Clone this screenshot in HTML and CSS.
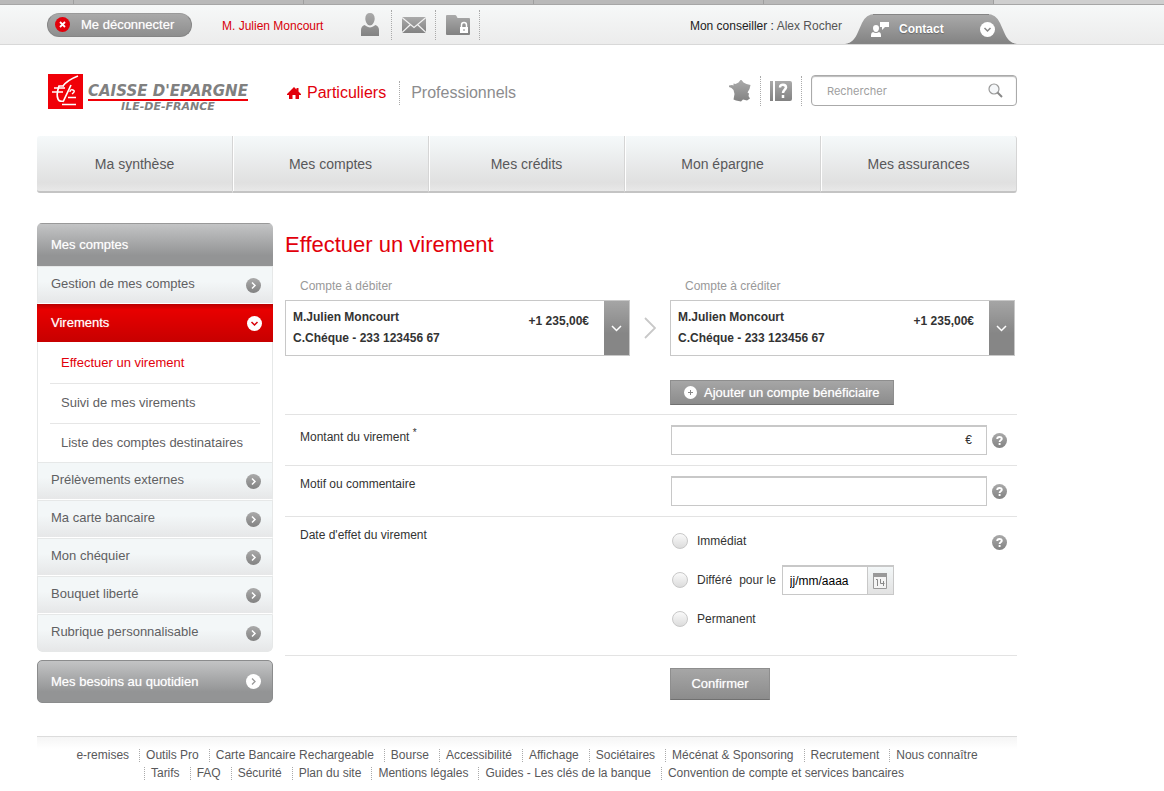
FILE: index.html
```html
<!DOCTYPE html>
<html lang="fr">
<head>
<meta charset="utf-8">
<title>Effectuer un virement</title>
<link rel="stylesheet" href="styles.css">
</head>
<body>
<svg class="defs" width="0" height="0" aria-hidden="true">
  <defs>
    <linearGradient id="grey" x1="0" y1="0" x2="0" y2="1"><stop offset="0" stop-color="#aaa"/><stop offset="1" stop-color="#828282"/></linearGradient>
    <symbol id="go" viewBox="0 0 15 15"><circle cx="7.500" cy="7.500" r="7.500" fill="url(#grey)"/><path d="M6 4.500l3 3-3 3" fill="none" stroke="#fff" stroke-width="1.500"/></symbol>
    <symbol id="help" viewBox="0 0 15 15"><circle cx="7.500" cy="7.500" r="7.500" fill="url(#grey)"/><path d="M5.200 6C5.200 3.300 9.800 3.300 9.800 5.800C9.800 7.300 7.600 7.300 7.600 9M7.600 10v2" fill="none" stroke="#fff" stroke-width="1.900"/></symbol>
  </defs>
</svg>

<div class="tabs"><i></i><i></i><i></i><i></i><i></i><i></i></div>

<div class="topbar">
  <div class="wrap topbar-in">
    <button class="logout" type="button">
      <svg width="15" height="15" viewBox="0 0 15 15"><circle cx="7.500" cy="7.500" r="7.500" fill="#e2000b"/><path d="M5 5l5 5M10 5l-5 5" stroke="#fff" stroke-width="1.800"/></svg>
      Me déconnecter
    </button>
    <span class="user">M. Julien Moncourt</span>
    <div class="tools">
      <a href="#" aria-label="Mon profil"><svg width="18" height="24" viewBox="0 0 18 24"><path d="M9 0c3 0 4.700 2 4.700 5.500S11.500 12.500 9 12.500 4.300 9 4.300 5.500 6 0 9 0zM3.500 12c1 0 2.500 2.500 5.500 2.500S13.500 12 14.500 12c2 .500 3.500 2.500 3.500 5V23H0v-6c0-2.500 1.500-4.500 3.500-5z" fill="url(#grey)"/></svg></a>
      <a href="#" aria-label="Messages"><svg width="24" height="16" viewBox="0 0 24 16"><path d="M0 0h24v16H0z" fill="url(#grey)"/><path d="M0 .500l12 10 12-10M0 15.500l8.500-8M24 15.500l-8.500-8" fill="none" stroke="#f3f3f3" stroke-width="1.200"/></svg></a>
      <a href="#" aria-label="Documents sécurisés"><svg width="24" height="20" viewBox="0 0 24 20"><path d="M0 1q0-1 1-1h8q1 0 1.500 1l1 2H23q1 0 1 1v15q0 1-1 1H1q-1 0-1-1z" fill="url(#grey)"/><path d="M14 12h8v6h-8z" fill="#fff"/><path d="M15.500 12v-2a2.500 2.500 0 0 1 5 0v2" fill="none" stroke="#fff" stroke-width="1.500"/><path d="M18 14v2" stroke="#888"/></svg></a>
    </div>
    <p class="adviser">Mon conseiller : <span>Alex Rocher</span></p>
    <button class="contact" type="button">
      <svg class="contact-bg" viewBox="0 0 172 30" preserveAspectRatio="none" aria-hidden="true"><path d="M0 30C7 29 10 25 13 18L17 9Q21 0 30 0H142Q151 0 155 9L159 18C162 25 165 29 172 30z" fill="url(#grey)"/><path d="M28 .500H144M3 29.500H169" stroke="#858585" fill="none"/></svg>
      <svg width="18" height="17" viewBox="0 0 18 17"><path d="M5 4c2 0 3 1 3 3s-1 4-3 4-3-2-3-4 1-3 3-3zM2 11q3 2 6 0 2 .500 2 3v2H0v-2q0-2.500 2-3zM9 1h9v5h-4l-3 3V6H9z" fill="#fff"/></svg>
      <span>Contact</span>
      <svg width="15" height="15" viewBox="0 0 15 15"><circle cx="7.500" cy="7.500" r="7.500" fill="#fff"/><path d="M4.500 6l3 3 3-3" fill="none" stroke="#888" stroke-width="1.500"/></svg>
    </button>
  </div>
</div>

<header class="wrap header">
  <a class="logo" href="#">
    <svg width="35" height="35" viewBox="0 0 35 35" aria-hidden="true"><path d="M0 0h35v35H0z" fill="#f00008"/><g fill="none" stroke="#fff"><path d="M30 2C22 5 18 8 15 12" stroke-width="1.500"/><path d="M16 12H11Q8 21 10 25q1 3 6 2M23 11L15 28" stroke-width="1.700"/><path d="M6 14h11M4 18h11" stroke-width="1.500"/><path d="M22 18q0-3 3-2t-1 4M20 23.500h8M14 30.500h14" stroke-width="1.400"/></g></svg>
    <span class="logo-text"><b class="logo-name">CAISSE D'EPARGNE</b><b class="logo-region">ILE-DE-FRANCE</b></span>
  </a>
  <nav class="segments">
    <a class="current" href="#"><svg width="14" height="12" viewBox="0 0 14 12" aria-hidden="true"><path d="M7 0l2.500 2.500V1h2v3.500L14 7v1h-2v4H8.500V8h-3v4H2V8H0V7z" fill="#e2000b"/></svg>Particuliers</a>
    <a href="#">Professionnels</a>
  </nav>
  <div class="shortcuts">
    <a href="#" aria-label="Agences"><svg width="22" height="22" viewBox="0 0 22 22"><path d="M11.500 0l1 0 2 2.500 3 1.500 4 1-1 4-2 3.500 1.500 1-.500 2.500 1.500 2.500-3 2-4-1-2 2-5-1-2.500-1 1-5.500-1-4-2-2L0 7V5.500l3-.500 1.500.500V3.500l2 .500 3-1.500z" fill="url(#grey)"/></svg></a>
    <a href="#" aria-label="Aide"><svg width="22" height="20" viewBox="0 0 22 20"><path d="M0 0h3v20H0zM5 0h15q2 0 2 2v16q0 2-2 2H5z" fill="url(#grey)"/><path d="M10 6.500C10 2.500 16 3 16 6.500C15.500 9 13 9 13 12M13 14v3" fill="none" stroke="#fff" stroke-width="2.500"/></svg></a>
  </div>
  <form class="search">
    <input type="search" placeholder="Rechercher" aria-label="Rechercher">
    <button type="button" aria-label="Lancer la recherche"><svg width="15" height="15" viewBox="0 0 15 15"><circle cx="6" cy="6" r="5" fill="#f5f7f9" stroke="#999" stroke-width="1.200"/><path d="M9.500 9.500l4.500 4.500" stroke="#888" stroke-width="2"/></svg></button>
  </form>
</header>

<nav class="wrap mainnav">
  <a href="#">Ma synthèse</a><a href="#">Mes comptes</a><a href="#">Mes crédits</a><a href="#">Mon épargne</a><a href="#">Mes assurances</a>
</nav>

<div class="wrap columns">
  <aside class="sidebar">
    <div class="menu">
      <h2 class="menu-head">Mes comptes</h2>
      <a class="item" href="#">Gestion de mes comptes<svg width="15" height="15"><use href="#go"/></svg></a>
      <a class="item open" href="#">Virements<svg width="15" height="15" viewBox="0 0 15 15"><circle cx="7.500" cy="7.500" r="7.500" fill="#fff"/><path d="M4.500 6l3 3 3-3" fill="none" stroke="#d8000a" stroke-width="1.500"/></svg></a>
      <ul class="submenu">
        <li><a class="current" href="#">Effectuer un virement</a></li>
        <li><a href="#">Suivi de mes virements</a></li>
        <li><a href="#">Liste des comptes destinataires</a></li>
      </ul>
      <a class="item" href="#">Prélèvements externes<svg width="15" height="15"><use href="#go"/></svg></a>
      <a class="item" href="#">Ma carte bancaire<svg width="15" height="15"><use href="#go"/></svg></a>
      <a class="item" href="#">Mon chéquier<svg width="15" height="15"><use href="#go"/></svg></a>
      <a class="item" href="#">Bouquet liberté<svg width="15" height="15"><use href="#go"/></svg></a>
      <a class="item" href="#">Rubrique personnalisable<svg width="15" height="15"><use href="#go"/></svg></a>
    </div>
    <a class="needs" href="#">Mes besoins au quotidien<svg width="15" height="15" viewBox="0 0 15 15"><circle cx="7.500" cy="7.500" r="7.500" fill="#fff"/><path d="M6 4.500l3 3-3 3" fill="none" stroke="#999" stroke-width="1.300"/></svg></a>
  </aside>

  <main class="main">
    <h1>Effectuer un virement</h1>
    <form>
      <div class="cols accounts">
        <span class="caption" id="debit">Compte à débiter</span>
        <span class="caption credit" id="credit">Compte à créditer</span>
        <button class="account" type="button" aria-haspopup="listbox" aria-labelledby="debit">
          <span class="who"><span>M.Julien Moncourt</span><span>C.Chéque - 233 123456 67</span></span>
          <span class="sum">+1 235,00€</span>
          <span class="drop"><svg width="11" height="7" viewBox="0 0 11 7"><path d="M1 1l4.500 4.500L10 1" fill="none" stroke="#fff" stroke-width="1.500"/></svg></span>
        </button>
        <svg class="arrow" width="12" height="22" viewBox="0 0 12 22" aria-hidden="true"><path d="M1 1l10 10L1 21" fill="none" stroke="#c8c8c8" stroke-width="1.800"/></svg>
        <button class="account" type="button" aria-haspopup="listbox" aria-labelledby="credit">
          <span class="who"><span>M.Julien Moncourt</span><span>C.Chéque - 233 123456 67</span></span>
          <span class="sum">+1 235,00€</span>
          <span class="drop"><svg width="11" height="7" viewBox="0 0 11 7"><path d="M1 1l4.500 4.500L10 1" fill="none" stroke="#fff" stroke-width="1.500"/></svg></span>
        </button>
      </div>
      <div class="cols adding">
        <button class="btn add" type="button"><svg width="13" height="13" viewBox="0 0 13 13"><circle cx="6.500" cy="6.500" r="6.500" fill="#fff"/><path d="M4 6.500h5M6.500 4v5" stroke="#888"/></svg>Ajouter un compte bénéficiaire</button>
      </div>
      <div class="cols row">
        <label class="name required" for="amount">Montant du virement <sup>*</sup></label>
        <div class="cell">
          <span class="field"><input id="amount" type="text"><span>€</span></span>
          <button class="help" type="button" aria-label="Aide sur le montant"><svg width="15" height="15"><use href="#help"/></svg></button>
        </div>
      </div>
      <div class="cols row">
        <label class="name" for="reason">Motif ou commentaire</label>
        <div class="cell">
          <span class="field"><input id="reason" type="text"></span>
          <button class="help" type="button" aria-label="Aide sur le motif"><svg width="15" height="15"><use href="#help"/></svg></button>
        </div>
      </div>
      <div class="cols row dates">
        <span class="name" id="when">Date d'effet du virement</span>
        <div class="cell">
          <div class="choices" role="radiogroup" aria-labelledby="when">
            <label><input type="radio" name="when">Immédiat</label>
            <div class="later">
              <label><input type="radio" name="when">Différé</label>
              <label class="for" for="day">pour le</label>
              <span class="date"><input id="day" type="text" value="jj/mm/aaaa"><button type="button" aria-label="Calendrier"><svg width="14" height="16" viewBox="0 0 14 16"><path d="M.500.500h13v15H.500z" fill="#f4f4f4" stroke="#999"/><path d="M0 0h14v4H0z" fill="#999"/><path d="M3 6.500h1.500V13M7.500 6v4.500h4M10.500 8v5" fill="none" stroke="#888"/></svg></button></span>
            </div>
            <label><input type="radio" name="when">Permanent</label>
          </div>
          <button class="help" type="button" aria-label="Aide sur la date"><svg width="15" height="15"><use href="#help"/></svg></button>
        </div>
      </div>
      <div class="cols row send">
        <button class="btn confirm" type="button">Confirmer</button>
      </div>
    </form>
  </main>
</div>

<footer class="wrap footer">
  <ul>
    <li><a href="#">e-remises</a></li><li><a href="#">Outils Pro</a></li><li><a href="#">Carte Bancaire Rechargeable</a></li><li><a href="#">Bourse</a></li><li><a href="#">Accessibilité</a></li><li><a href="#">Affichage</a></li><li><a href="#">Sociétaires</a></li><li><a href="#">Mécénat &amp; Sponsoring</a></li><li><a href="#">Recrutement</a></li><li><a href="#">Nous connaître</a></li>
  </ul>
  <ul class="second">
    <li><a href="#">Tarifs</a></li><li><a href="#">FAQ</a></li><li><a href="#">Sécurité</a></li><li><a href="#">Plan du site</a></li><li><a href="#">Mentions légales</a></li><li><a href="#">Guides - Les clés de la banque</a></li><li><a href="#">Convention de compte et services bancaires</a></li>
  </ul>
</footer>
</body>
</html>
```
FILE: styles.css
```css
* { box-sizing: border-box; }
body { margin: 0; background: #fff; color: #333; font: 12px/18px "Liberation Sans", Arial, sans-serif; }
a { color: inherit; text-decoration: none; }
button { font: inherit; color: inherit; border: 0; padding: 0; background: none; cursor: pointer; }
input { font: inherit; color: #000; }
svg { display: block; flex: none; }
h1, h2, p, ul { margin: 0; padding: 0; }
ul { list-style: none; }
.defs { position: absolute; }
.wrap { max-width: 980px; margin-left: 37px; }

.tabs { display: grid; grid-template-columns: 74px repeat(4, 230px) 1fr; height: 5px; background: #b9b9b9; border-bottom: 1px solid #a6a6a6; }
.tabs i { border-right: 1px solid #9f9f9f; }
.tabs i:last-child { background: #cfcfcf; border: 0; }

.topbar { background: linear-gradient(#f6f8f8, #ececec); border-bottom: 1px solid #d8d8d8; }
.topbar-in { display: flex; align-items: center; height: 39px; padding-left: 10px; }
.logout { display: flex; align-items: center; gap: 11px; width: 145px; height: 24px; padding-left: 7px; border-radius: 12px; background: linear-gradient(#a9a9a9, #8e8e8e); border: 1px solid #858585; border-top-color: #9a9a9a; color: #fff; font-size: 13px; text-shadow: 0 0 1px rgba(255, 255, 255, .6); }
.user { margin-left: 30px; padding-top: 2px; color: #d8000a; }
.tools { display: flex; margin-left: 25px; height: 30px; }
.tools a { display: flex; align-items: center; justify-content: center; width: 44px; border-right: 1px dotted #aaa; }
.adviser { margin-left: auto; padding-top: 2px; color: #222; }
.adviser span { color: #555; }
.contact { position: relative; display: flex; align-items: center; width: 172px; height: 30px; margin-left: 3px; padding: 0 22px 0 26px; align-self: flex-end; color: #fff; font-weight: bold; text-shadow: 0 1px 1px #666; }
.contact > * { position: relative; }
.contact .contact-bg { position: absolute; inset: 0; width: 100%; height: 100%; }
.contact span { flex: 1; text-align: left; padding-left: 10px; }

.header { display: flex; align-items: center; height: 91px; padding-left: 11px; }
.logo { display: flex; gap: 5px; width: 239px; padding-top: 5px; }
.logo-text { display: flex; flex-direction: column; padding-top: 9px; color: #808080; font-family: "DejaVu Sans", sans-serif; font-style: italic; white-space: nowrap; }
.logo-name { font-size: 15px; line-height: 16px; border-bottom: 2px solid #f00008; }
.logo-region { font-size: 11px; line-height: 12px; text-align: center; }
.segments { display: flex; font-size: 16px; line-height: 24px; color: #8c8c8e; padding-top: 4px; }
.segments a { display: flex; align-items: center; gap: 6px; }
.segments .current { color: #e2000b; padding-right: 13px; border-right: 1px dotted #aaa; margin-right: 11px; }
.shortcuts { display: flex; align-items: center; margin-left: auto; }
.shortcuts a { display: flex; align-items: center; width: 41px; height: 30px; padding-left: 9px; border-right: 1px dotted #aaa; }
.search { display: flex; align-items: center; width: 206px; height: 31px; margin-left: 9px; padding: 0 13px 0 15px; border: 1px solid #aaa; border-radius: 4px; box-shadow: inset 0 1px 1px #bbb; }
.search input { flex: 1; min-width: 0; border: 0; padding: 0; background: none; outline: 0; font: 11px/16px Inter, sans-serif; }
.search input::placeholder { color: #a0a0a0; }

.mainnav { display: grid; grid-template-columns: repeat(5, 1fr); height: 57px; }
.mainnav a { display: flex; align-items: center; justify-content: center; font-size: 14px; color: #58585a; background: linear-gradient(#f5f9fa, #e0e0e0 85%, #e8e8e8); border-bottom: 2px solid #c4c4c4; border-right: 1px solid #d5d5d5; }
.mainnav a + a { box-shadow: inset 1px 0 #fff; }
.mainnav a:first-child { border-radius: 3px 0 0 3px; }
.mainnav a:last-child { border-radius: 0 3px 3px 0; }

.columns { display: grid; grid-template-columns: 236px 1fr; gap: 12px; margin-top: 30px; align-items: start; font-size: 13px; }
.menu { border-radius: 5px; overflow: hidden; color: #5f6062; }
.menu-head, .needs { display: flex; align-items: center; justify-content: space-between; height: 43px; padding: 0 12px 0 14px; background: linear-gradient(#c3c4c5, #939495 75%); color: #fff; font-size: 13px; font-weight: normal; text-shadow: 0 0 1px rgba(255, 255, 255, .6); }
.menu-head { border-top: 1px solid #999; }
.needs { margin-top: 8px; border-radius: 5px; border: 1px solid #8b8c8d; padding: 0 11px 0 13px; }
.item { display: flex; align-items: center; justify-content: space-between; height: 38px; padding: 0 11px 2px 13px; border: 1px solid #e6e8e8; border-bottom-color: #fff; background: linear-gradient(#f3f7f8 40%, #e6e7e8); }
.item svg { margin-top: 2px; }
.item:last-child { border-color: #e6e8e8; border-radius: 0 0 5px 5px; }
.open { border: 0; padding: 0 11px 0 14px; color: #fff; background: linear-gradient(#b80000, #e80000 15%, #c70000); text-shadow: 0 0 1px rgba(255, 255, 255, .6); }
.open svg { margin: 0; }
.submenu { padding: 0 12px; border: solid #e6e8e8; border-width: 0 1px; }
.submenu li { height: 40px; padding: 11px 11px 0; line-height: 18px; }
.submenu li:first-child { height: 41px; padding-top: 12px; }
.submenu li:last-child { height: 39px; }
.submenu li + li { border-top: 1px solid #e6e6e6; padding-top: 10px; }
.submenu .current { color: #e2000b; }

.main { font-size: 12px; }
h1 { padding-top: 8px; font-size: 22px; line-height: 28px; font-weight: normal; color: #e2000b; }
.cols { display: grid; grid-template-columns: 1fr 40px 1fr 2px; }
.accounts { padding-top: 18px; row-gap: 5px; }
.caption { padding-left: 15px; color: #999; }
.credit { grid-column: 3 / 5; }
.account { display: flex; height: 56px; border: 1px solid #c8c8c8; text-align: left; font-weight: bold; }
.who { display: flex; flex-direction: column; flex: 1; padding: 6px 7px; line-height: 21px; }
.sum { padding: 11px 15px 0 0; }
.drop { display: flex; align-items: center; justify-content: center; align-self: stretch; width: 25px; background: linear-gradient(#a5a5a5, #868686 60%); }
.arrow { place-self: center; }
.btn { grid-column: 3; justify-self: start; display: flex; align-items: center; justify-content: center; border: 1px solid #8e8e8e; border-bottom-color: #707070; background: linear-gradient(#a6a6a6, #8c8c8c); color: #fff; font-size: 13px; text-shadow: 0 0 1px rgba(255, 255, 255, .6); }
.adding { padding: 24px 0 9px; }
.add { gap: 7px; height: 25px; padding: 0 13px; }
.row { border-top: 1px solid #e3e3e3; min-height: 51px; }
.name { grid-column: 1 / 3; padding: 9px 15px; }
.required { padding-top: 13px; }
.name sup { font-size: 10px; line-height: 0; }
.cell { grid-column: 3 / 5; display: flex; align-items: flex-start; gap: 5px; padding: 10px 10px 10px 1px; }
.field { position: relative; flex: 1; display: flex; }
.field input { width: 100%; height: 30px; padding: 0 24px 0 8px; border: 1px solid #c8c8c8; border-top-width: 2px; border-radius: 0; outline: 0; }
.field span { position: absolute; right: 15px; top: 6px; }
.help { margin-top: 8px; }
.dates { min-height: 139px; }
.choices { flex: 1; display: flex; flex-direction: column; gap: 15px; padding-top: 5px; }
.choices label { display: flex; align-items: center; }
.choices input[type="radio"] { appearance: none; width: 16px; height: 16px; margin: 0 9px 0 1px; border: 1px solid #c8c8c8; border-radius: 50%; background: linear-gradient(#fafafa, #dcdcdc); }
.later { display: flex; align-items: center; }
.later .for { margin: 0 6px 0 7px; }
.date { display: flex; width: 112px; height: 30px; border: 1px solid #c8c8c8; border-top-width: 2px; }
.date input { flex: 1; min-width: 0; padding: 0 7px; border: 0; outline: 0; }
.date button { display: flex; align-items: center; justify-content: center; width: 26px; border-left: 1px solid #c8c8c8; background: linear-gradient(#f3f7f8, #e2e2e2); }
.send { padding-top: 12px; }
.confirm { width: 100px; height: 32px; }

.footer { margin-top: 30px; padding: 9px 0; border-top: 1px solid #dcdcdc; background: linear-gradient(#f5f5f5, #fff 12px); color: #58585a; }
.footer ul { display: flex; flex-wrap: wrap; justify-content: center; column-gap: 10px; }
.footer .second { padding-right: 6px; }
.footer li { height: 18px; }
.footer li a { display: block; height: 13px; line-height: 13px; margin-top: 3px; }
.footer li + li a, .second li a { border-left: 1px dotted #aaa; padding-left: 6px; }
```
